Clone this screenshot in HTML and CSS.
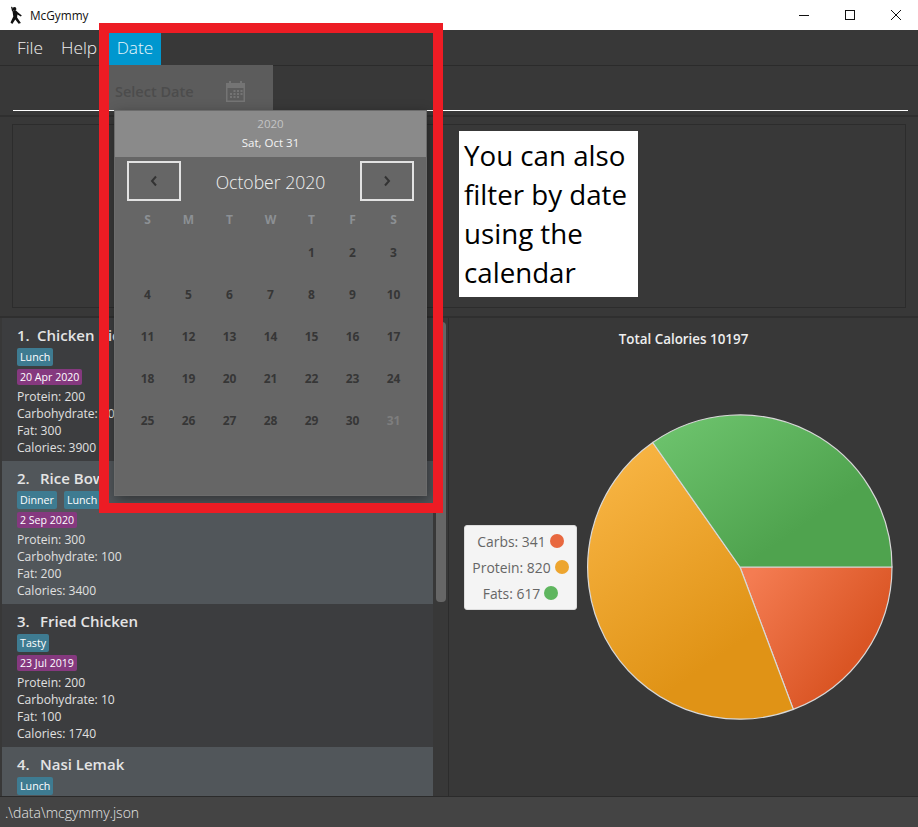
FILE: index.html
```html
<!DOCTYPE html>
<html lang="en">
<head>
<meta charset="utf-8">
<title>McGymmy</title>
<link rel="stylesheet" href="styles.css">
</head>
<body>
<div class="app">
  <header class="titlebar">
    <svg class="app-icon" width="16" height="18" viewBox="0 0 16 18"><circle cx="4.500" cy="3" r="1.900" fill="#111"/><path d="M2.500 5.300l3.500-.9 1.800 1.800 4 3.200-1 1.200-3.400-2.100-.3 3 3.800 5.500-2.300.8-3.300-4.300-3 4.500L.5 16.500 3.300 10.500zM1 .8l1.400.2 1 3.600-1.300 1z" fill="#111"/></svg>
    <span class="app-name">McGymmy</span>
    <div class="win-controls">
      <svg width="12" height="12" viewBox="0 0 12 12"><path d="M1 6.500h10" stroke="#111" fill="none"/></svg>
      <svg width="12" height="12" viewBox="0 0 12 12"><rect x="1.500" y="1.500" width="9" height="9" stroke="#111" fill="none"/></svg>
      <svg width="12" height="12" viewBox="0 0 12 12"><path d="M1 1l10 10M11 1L1 11" stroke="#111" fill="none"/></svg>
    </div>
  </header>

  <nav class="menubar">
    <span class="menu-item">File</span>
    <span class="menu-item">Help</span>
  </nav>

  <section class="searchbar"><div class="search-line"></div></section>

  <section class="result-panel"><div class="result-box"></div></section>

  <main class="content">
    <div class="list-pane">
      <ul class="food-list">
        <li class="cell">
          <h2 class="cell-title"><span class="cell-index narrow">1.</span>Chicken Rice</h2>
          <div class="tags"><span class="tag">Lunch</span></div>
          <div class="tags"><span class="date-tag">20 Apr 2020</span></div>
          <p class="stat">Protein: 200</p><p class="stat">Carbohydrate: 100</p><p class="stat">Fat: 300</p><p class="stat">Calories: 3900</p>
        </li>
        <li class="cell alt">
          <h2 class="cell-title"><span class="cell-index">2.</span>Rice Bowl</h2>
          <div class="tags"><span class="tag">Dinner</span><span class="tag">Lunch</span></div>
          <div class="tags"><span class="date-tag">2 Sep 2020</span></div>
          <p class="stat">Protein: 300</p><p class="stat">Carbohydrate: 100</p><p class="stat">Fat: 200</p><p class="stat">Calories: 3400</p>
        </li>
        <li class="cell">
          <h2 class="cell-title"><span class="cell-index">3.</span>Fried Chicken</h2>
          <div class="tags"><span class="tag">Tasty</span></div>
          <div class="tags"><span class="date-tag">23 Jul 2019</span></div>
          <p class="stat">Protein: 200</p><p class="stat">Carbohydrate: 10</p><p class="stat">Fat: 100</p><p class="stat">Calories: 1740</p>
        </li>
        <li class="cell alt">
          <h2 class="cell-title"><span class="cell-index">4.</span>Nasi Lemak</h2>
          <div class="tags"><span class="tag">Lunch</span></div>
        </li>
      </ul>
      <div class="scroll-track"><div class="scroll-thumb"></div></div>
    </div>
    <div class="chart-pane">
      <h3 class="chart-title">Total Calories 10197</h3>
      <div class="chart-row">
        <div class="legend">
          <div class="legend-row">Carbs: 341<i class="dot dot-red"></i></div>
          <div class="legend-row">Protein: 820<i class="dot dot-orange"></i></div>
          <div class="legend-row">Fats: 617<i class="dot dot-green"></i></div>
        </div>
        <svg class="pie" width="306" height="306" viewBox="0 0 306 306">
          <defs>
            <linearGradient id="gr" gradientUnits="userSpaceOnUse" x1="165" y1="160" x2="270" y2="240"><stop offset="0" stop-color="#f47c52"/><stop offset="1" stop-color="#da5524"/></linearGradient>
            <linearGradient id="go" gradientUnits="userSpaceOnUse" x1="30" y1="60" x2="150" y2="230"><stop offset="0" stop-color="#f6b240"/><stop offset="1" stop-color="#e09316"/></linearGradient>
            <linearGradient id="gg" gradientUnits="userSpaceOnUse" x1="100" y1="0" x2="190" y2="130"><stop offset="0" stop-color="#6cc26c"/><stop offset="1" stop-color="#4fa34e"/></linearGradient>
          </defs>
          <path d="M153 153L305 153A152 152 0 0 1 206.300 295.400Z" fill="url(#gr)" stroke="#d8d8d8" stroke-width="1.200"/>
          <path d="M153 153L206.300 295.400A152 152 0 0 1 65.700 28.500Z" fill="url(#go)" stroke="#d8d8d8" stroke-width="1.200"/>
          <path d="M153 153L65.700 28.500A152 152 0 0 1 305 153Z" fill="url(#gg)" stroke="#d8d8d8" stroke-width="1.200"/>
        </svg>
      </div>
    </div>
  </main>

  <footer class="statusbar">.\data\mcgymmy.json</footer>
</div>

<div class="highlight-frame">
  <div class="date-tab">Date</div>
  <div class="date-button">
    <span class="date-label">Select Date</span>
    <svg class="cal-icon" width="21" height="22" viewBox="0 0 21 22"><path fill="#747474" d="M1 3h3V1h2v2h9V1h2v2h3v19H1zM2.500 8v12.500h16V8zM8.500 10h2v2h-2zm3.500 0h2v2h-2zm3.500 0h2v2h-2zM5 13h2v2H5zm3.500 0h2v2h-2zm3.500 0h2v2h-2zm3.500 0h2v2h-2zM5 16h2v2H5zm3.500 0h2v2h-2zm3.500 0h2v2h-2z"/></svg>
  </div>
  <div class="calendar">
    <div class="cal-header">
      <div class="cal-year">2020</div>
      <div class="cal-date">Sat, Oct 31</div>
    </div>
    <div class="cal-nav">
      <div class="cal-btn"><svg width="10" height="12" viewBox="0 0 10 12"><path d="M7 1.500L3 6l4 4.500" stroke="#333" stroke-width="2" fill="none"/></svg></div>
      <div class="cal-month">October 2020</div>
      <div class="cal-btn"><svg width="10" height="12" viewBox="0 0 10 12"><path d="M3 1.500L7 6l-4 4.500" stroke="#333" stroke-width="2" fill="none"/></svg></div>
    </div>
    <div class="weekdays"><span>S</span><span>M</span><span>T</span><span>W</span><span>T</span><span>F</span><span>S</span></div>
    <div class="days">
      <span></span><span></span><span></span><span></span><span>1</span><span>2</span><span>3</span>
      <span>4</span><span>5</span><span>6</span><span>7</span><span>8</span><span>9</span><span>10</span>
      <span>11</span><span>12</span><span>13</span><span>14</span><span>15</span><span>16</span><span>17</span>
      <span>18</span><span>19</span><span>20</span><span>21</span><span>22</span><span>23</span><span>24</span>
      <span>25</span><span>26</span><span>27</span><span>28</span><span>29</span><span>30</span><span class="day-muted">31</span>
    </div>
  </div>
</div>

<div class="callout">You can also filter by date using the calendar</div>
</body>
</html>
```
FILE: styles.css
```css
* { box-sizing: border-box; }
html, body { margin: 0; padding: 0; height: 100%; overflow: hidden; }
body { font-family: "Open Sans", "Noto Sans", sans-serif; background: #383838; color: #e6e6e6; position: relative; }
p, h2, h3, ul { margin: 0; padding: 0; }

.app { display: flex; flex-direction: column; height: 827px; width: 918px; }

.titlebar { height: 30px; background: #fff; display: flex; align-items: center; padding-left: 10px; color: #111; flex: none; }
.app-icon { flex: none; }
.app-name { font-size: 11.8px; margin-left: 4px; }
.win-controls { margin-left: auto; display: flex; gap: 34px; padding-right: 16px; }

.menubar { height: 36px; flex: none; display: flex; align-items: center; gap: 18px; padding: 0 0 1px 17px; background: #383838; border-bottom: 1px solid #2b2b2b; font-size: 17.3px; font-weight: 300; color: #f0f0f0; }

.searchbar { height: 50px; flex: none; padding: 44px 10px 0 13px; background: #383838; border-bottom: 1px solid #2f2f2f; }
.search-line { height: 1px; background: #fff; }

.result-panel { height: 202px; flex: none; padding: 7px 12px 8px; background: #383838; border-top: 1px solid #2f2f2f; border-bottom: 2px solid #2f2f2f; }
.result-box { height: 100%; border: 1px solid #2c2c2c; }

.content { flex: 1; min-height: 0; display: flex; overflow: hidden; }
.list-pane { width: 449px; flex: none; display: flex; padding-left: 2px; border-right: 1px solid #2c2c2c; overflow: hidden; }
.food-list { list-style: none; width: 431px; flex: none; }
.cell { height: 143px; background: #3c3d3f; padding: 6px 0 0 15px; }
.cell.alt { background: #51565a; }
.cell-title { font-size: 15px; line-height: 22px; font-weight: 600; color: #e4e4e4; display: flex; }
.cell-index { width: 23px; flex: none; }
.cell-index.narrow { width: 20px; }
.tags { display: flex; gap: 7px; height: 21px; align-items: center; }
.tags + .tags { height: 20px; }
.tag { background: #3e7b91; color: #fff; font-size: 10.7px; line-height: 18px; padding: 0 3px; border-radius: 2px; }
.date-tag { background: #85397f; color: #fff; font-size: 10.6px; line-height: 16px; padding: 0 3px; border-radius: 2px; }
.stat { font-size: 12.1px; line-height: 17px; color: #e0e0e0; }
.stat:first-of-type { margin-top: 1px; }

.scroll-track { flex: 1; padding: 4px 2px 0 3px; }
.scroll-thumb { height: 280px; background: #666; border-radius: 4px; }

.chart-pane { flex: 1; display: flex; flex-direction: column; background: #383838; }
.chart-title { font-size: 13.4px; font-weight: 600; color: #eee; text-align: center; line-height: 20px; margin-top: 11px; }
.chart-row { display: flex; align-items: center; gap: 10px; padding-left: 15px; margin-top: 65px; }
.pie { flex: none; }
.legend { width: 113px; height: 85px; flex: none; background: #f4f4f4; border: 1px solid #ddd; border-radius: 3px; display: flex; flex-direction: column; justify-content: center; color: #666; font-size: 13.9px; }
.legend-row { display: flex; align-items: center; justify-content: center; gap: 4px; height: 26px; }
.dot { width: 14px; height: 14px; border-radius: 50%; flex: none; }
.dot-red { background: #e8683f; }
.dot-orange { background: #eda52f; }
.dot-green { background: #5fb65f; }

.statusbar { height: 31px; flex: none; background: #444; border-top: 1px solid #2b2b2b; padding-left: 5px; font-size: 14px; font-weight: 300; line-height: 32px; color: #e6e6e6; }

.highlight-frame { position: absolute; left: 99px; top: 23px; width: 344px; height: 490px; border: 10px solid #ed1c24; overflow: hidden; }
.date-tab { width: 52px; height: 32px; background: #0097cf; color: #e8f6fb; font-size: 17.3px; font-weight: 300; text-align: center; line-height: 30px; }
.date-button { width: 164px; height: 45px; background: #5c5c5c; display: flex; align-items: center; padding: 7px 0 0 6px; }
.date-label { font-size: 14.5px; font-weight: 600; color: #4c4c4c; }
.cal-icon { margin-left: auto; margin-right: 27px; }
.calendar { width: 313px; height: 386px; margin-left: 5px; background: #666; border: 1px solid #6c6c6c; box-shadow: 2px 4px 12px rgba(0,0,0,.4); }
.cal-header { height: 46px; background: #8a8a8a; text-align: center; padding-top: 3px; }
.cal-year { font-size: 11.5px; line-height: 19px; color: #c4c4c4; }
.cal-date { font-size: 11.5px; line-height: 19px; color: #f4f4f4; }
.cal-nav { display: flex; align-items: center; justify-content: space-between; padding: 4px 12px 0; }
.cal-btn { width: 54px; height: 40px; border: 2px solid #e2e2e2; display: flex; align-items: center; justify-content: center; }
.cal-month { font-size: 17.6px; font-weight: 300; color: #f0f0f0; position: relative; top: 1px; }
.weekdays, .days { display: grid; grid-template-columns: repeat(7, 41px); margin-left: 12px; text-align: center; font-weight: 700; font-size: 12px; }
.weekdays { height: 20px; line-height: 20px; margin-top: 9px; color: #8c9094; }
.days { grid-auto-rows: 42px; line-height: 42px; margin-top: 2px; color: #363636; }
.day-muted { color: #7e7e7e; }

.callout { position: absolute; left: 459px; top: 131px; width: 179px; height: 166px; background: #fff; color: #000; font-size: 27.7px; line-height: 39px; padding: 5px 0 0 5px; }
```
